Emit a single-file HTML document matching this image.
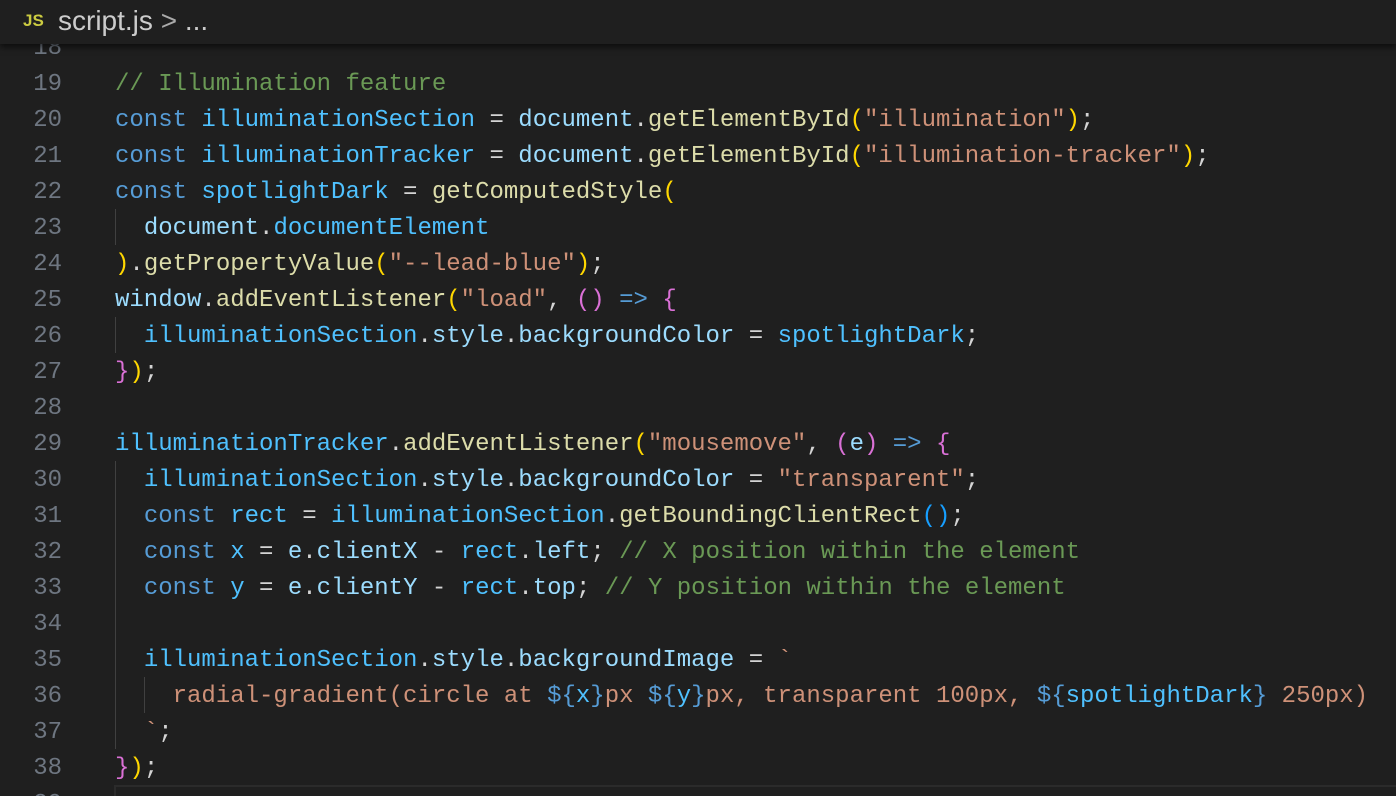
<!DOCTYPE html>
<html><head><meta charset="utf-8"><style>
html,body{margin:0;padding:0;width:1396px;height:796px;overflow:hidden;background:#1f1f1f;}
body{position:relative;font-family:"Liberation Mono",monospace;font-size:24px;}
.hdr{position:absolute;left:0;top:0;width:1396px;height:44px;background:#1f1f1f;box-shadow:0 3px 6px rgba(0,0,0,.6);z-index:5;font-family:"Liberation Sans",sans-serif;}
.hdr .js{position:absolute;left:23px;top:11px;color:#cbcb41;font-weight:bold;font-size:17px;}
.hdr .nm{position:absolute;left:58px;top:5px;color:#cccccc;font-size:28px;}
.ln{position:absolute;left:0;width:62px;text-align:right;color:#6e7681;height:36px;line-height:36px;white-space:pre;margin-top:2px;}
.cd{position:absolute;left:115px;height:36px;line-height:36px;white-space:pre;color:#d4d4d4;margin-top:2px;}
.g{position:absolute;width:1px;background:#404040;}
.k{color:#569cd6}.v{color:#4fc1ff}.p{color:#9cdcfe}.f{color:#dcdcaa}.s{color:#ce9178}.c{color:#6a9955}.y{color:#ffd700}.m{color:#da70d6}.b{color:#179fff}
</style></head><body>
<div class="hdr"><span class="js">JS</span><span class="nm">script.js <span style="color:#aaa">&gt;</span> ...</span></div>

<div class="ln" style="top:29px">18</div>
<div class="ln" style="top:65px">19</div><div class="cd" style="top:65px"><span class="c">// Illumination feature</span></div>
<div class="ln" style="top:101px">20</div><div class="cd" style="top:101px"><span class="k">const</span> <span class="v">illuminationSection</span> = <span class="p">document</span>.<span class="f">getElementById</span><span class="y">(</span><span class="s">"illumination"</span><span class="y">)</span>;</div>
<div class="ln" style="top:137px">21</div><div class="cd" style="top:137px"><span class="k">const</span> <span class="v">illuminationTracker</span> = <span class="p">document</span>.<span class="f">getElementById</span><span class="y">(</span><span class="s">"illumination-tracker"</span><span class="y">)</span>;</div>
<div class="ln" style="top:173px">22</div><div class="cd" style="top:173px"><span class="k">const</span> <span class="v">spotlightDark</span> = <span class="f">getComputedStyle</span><span class="y">(</span></div>
<div class="ln" style="top:209px">23</div><div class="cd" style="top:209px">  <span class="p">document</span>.<span class="v">documentElement</span></div>
<div class="ln" style="top:245px">24</div><div class="cd" style="top:245px"><span class="y">)</span>.<span class="f">getPropertyValue</span><span class="y">(</span><span class="s">"--lead-blue"</span><span class="y">)</span>;</div>
<div class="ln" style="top:281px">25</div><div class="cd" style="top:281px"><span class="p">window</span>.<span class="f">addEventListener</span><span class="y">(</span><span class="s">"load"</span>, <span class="m">()</span> <span class="k">=&gt;</span> <span class="m">{</span></div>
<div class="ln" style="top:317px">26</div><div class="cd" style="top:317px">  <span class="v">illuminationSection</span>.<span class="p">style</span>.<span class="p">backgroundColor</span> = <span class="v">spotlightDark</span>;</div>
<div class="ln" style="top:353px">27</div><div class="cd" style="top:353px"><span class="m">}</span><span class="y">)</span>;</div>
<div class="ln" style="top:389px">28</div>
<div class="ln" style="top:425px">29</div><div class="cd" style="top:425px"><span class="v">illuminationTracker</span>.<span class="f">addEventListener</span><span class="y">(</span><span class="s">"mousemove"</span>, <span class="m">(</span><span class="p">e</span><span class="m">)</span> <span class="k">=&gt;</span> <span class="m">{</span></div>
<div class="ln" style="top:461px">30</div><div class="cd" style="top:461px">  <span class="v">illuminationSection</span>.<span class="p">style</span>.<span class="p">backgroundColor</span> = <span class="s">"transparent"</span>;</div>
<div class="ln" style="top:497px">31</div><div class="cd" style="top:497px">  <span class="k">const</span> <span class="v">rect</span> = <span class="v">illuminationSection</span>.<span class="f">getBoundingClientRect</span><span class="b">()</span>;</div>
<div class="ln" style="top:533px">32</div><div class="cd" style="top:533px">  <span class="k">const</span> <span class="v">x</span> = <span class="p">e</span>.<span class="p">clientX</span> - <span class="v">rect</span>.<span class="p">left</span>; <span class="c">// X position within the element</span></div>
<div class="ln" style="top:569px">33</div><div class="cd" style="top:569px">  <span class="k">const</span> <span class="v">y</span> = <span class="p">e</span>.<span class="p">clientY</span> - <span class="v">rect</span>.<span class="p">top</span>; <span class="c">// Y position within the element</span></div>
<div class="ln" style="top:605px">34</div>
<div class="ln" style="top:641px">35</div><div class="cd" style="top:641px">  <span class="v">illuminationSection</span>.<span class="p">style</span>.<span class="p">backgroundImage</span> = <span class="s">`</span></div>
<div class="ln" style="top:677px">36</div><div class="cd" style="top:677px"><span class="s">    radial-gradient(circle at </span><span class="k">${</span><span class="v">x</span><span class="k">}</span><span class="s">px </span><span class="k">${</span><span class="v">y</span><span class="k">}</span><span class="s">px, transparent 100px, </span><span class="k">${</span><span class="v">spotlightDark</span><span class="k">}</span><span class="s"> 250px)</span></div>
<div class="ln" style="top:713px">37</div><div class="cd" style="top:713px">  <span class="s">`</span>;</div>
<div class="ln" style="top:749px">38</div><div class="cd" style="top:749px"><span class="m">}</span><span class="y">)</span>;</div>
<div class="ln" style="top:785px">39</div>

<div class="g" style="left:115px;top:209px;height:36px"></div>
<div class="g" style="left:115px;top:317px;height:36px"></div>
<div class="g" style="left:115px;top:461px;height:288px"></div>
<div class="g" style="left:144px;top:677px;height:36px"></div>
<div style="position:absolute;left:114px;top:785px;width:1282px;height:11px;border-top:2px solid #2b2b2b;border-left:2px solid #2b2b2b;box-sizing:border-box;background:#1f1f1f"></div>
</body></html>
